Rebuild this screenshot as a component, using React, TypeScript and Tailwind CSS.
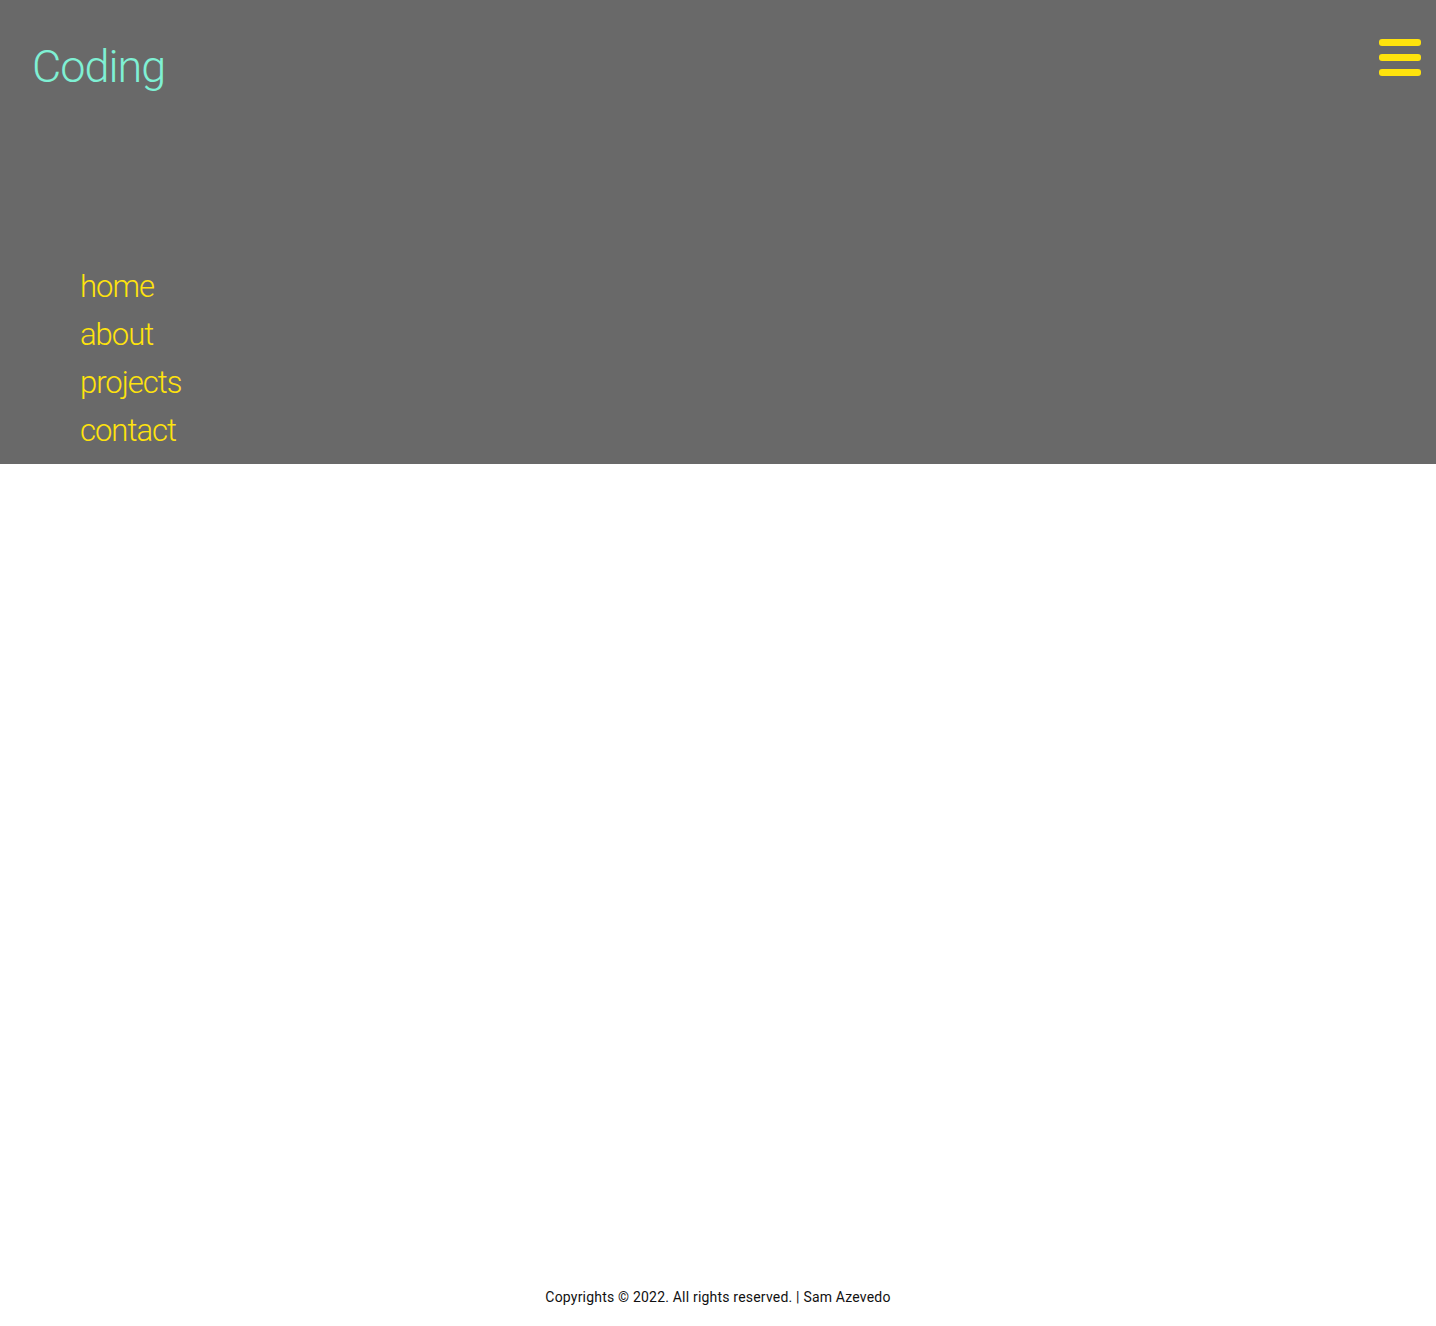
import { useState } from "react";

const links = ["home", "about", "projects", "contact"];

function Hamburger({ onClick }: { onClick: () => void }) {
  return (
    <button
      onClick={onClick}
      className="flex flex-col gap-[8px] w-[42px] mt-[39px] mr-[15px]"
      aria-label="menu"
    >
      <span className="block h-[7px] w-full rounded-[3px] bg-[#ffe30d]" />
      <span className="block h-[7px] w-full rounded-[3px] bg-[#ffe30d]" />
      <span className="block h-[7px] w-full rounded-[3px] bg-[#ffe30d]" />
    </button>
  );
}

export default function App() {
  const [open, setOpen] = useState(true);

  return (
    <div className="min-h-[1326px] flex flex-col bg-white font-['Roboto',sans-serif]">
      {/* Header */}
      <header className="bg-[#696969] flex flex-col">
        <div className="flex justify-between items-start">
          <h1 className="pl-[32px] pt-[38px] text-[45px] leading-[58px] font-light text-[#7ff0d4] tracking-[-1px]">
            Coding
          </h1>
          <Hamburger onClick={() => setOpen(!open)} />
        </div>

        {open && (
          <nav className="pl-[80px] pt-[167px] pb-[9px]">
            <ul className="flex flex-col">
              {links.map((l) => (
                <li key={l}>
                  <a
                    href={`#${l}`}
                    className="block text-[31px] leading-[48px] font-light tracking-[-1px] text-[#ffe30d]"
                  >
                    {l}
                  </a>
                </li>
              ))}
            </ul>
          </nav>
        )}
      </header>

      <main className="flex-1" />

      {/* Footer */}
      <footer className="pb-[19px] text-center">
        <p className="text-[14px] leading-[20px] tracking-[0.2px] text-[#111]">
          Copyrights © 2022. All rights reserved. | Sam Azevedo
        </p>
      </footer>
    </div>
  );
}
